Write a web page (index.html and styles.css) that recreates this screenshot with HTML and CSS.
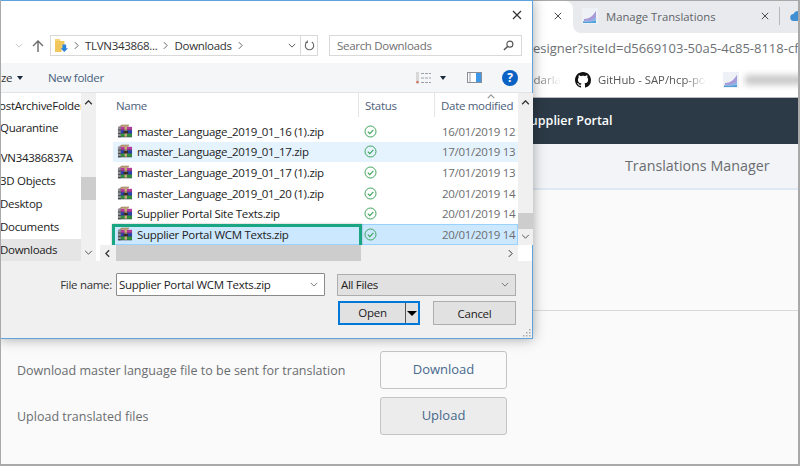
FILE: index.html
```html
<!DOCTYPE html>
<html lang="en">
<head>
<meta charset="utf-8">
<title>Manage Translations</title>
<link rel="stylesheet" href="styles.css">
</head>
<body>
<svg class="sprite" aria-hidden="true">
  <symbol id="rar" viewBox="0 0 17 16">
    <path d="M2 3 5 .8h8l-1.500 2.400z" fill="#8a6a3c"/>
    <path d="M5 1.500h7.500L12 3H3.500z" fill="#d8c49a"/>
    <rect x="1" y="3" width="15" height="3.600" fill="#b23c9c"/>
    <rect x="1" y="6.600" width="15" height="3.600" fill="#2a3fb0"/>
    <rect x="1" y="10.200" width="15" height="3.600" fill="#2f8f3c"/>
    <rect x="1" y="3" width="3" height="10.800" fill="#8d8f92"/>
    <path d="M1 6.400h3M1 10h3M1 13.600h3" stroke="#2d2d2d" stroke-width=".8"/>
    <rect x="8" y="3" width="2.600" height="10.800" fill="#c8ad78"/>
    <rect x="7" y="7.400" width="4.600" height="2.200" fill="#3b3020"/>
    <path d="M4 6.500h12M4 10.100h12M1 13.900h15" stroke="#1d1d3a" stroke-width=".5"/>
  </symbol>
  <symbol id="ok" viewBox="0 0 13 13">
    <circle cx="6.500" cy="6.500" r="5.500" fill="none" stroke="#3da35a" stroke-width="1"/>
    <path d="M3.800 6.600 5.800 8.600 9.400 4.800" fill="none" stroke="#3da35a" stroke-width="1.100"/>
  </symbol>
  <symbol id="chev-down" viewBox="0 0 10 6">
    <path d="M1 1 5 5 9 1" fill="none" stroke="currentColor" stroke-width="1.200"/>
  </symbol>
  <symbol id="chev-up" viewBox="0 0 10 6">
    <path d="M1 5 5 1 9 5" fill="none" stroke="currentColor" stroke-width="1.600"/>
  </symbol>
  <symbol id="chev-right" viewBox="0 0 6 10">
    <path d="M1 1 5 5 1 9" fill="none" stroke="currentColor" stroke-width="1.200"/>
  </symbol>
  <symbol id="chev-left" viewBox="0 0 6 10">
    <path d="M5 1 1 5 5 9" fill="none" stroke="currentColor" stroke-width="1.600"/>
  </symbol>
  <symbol id="close" viewBox="0 0 10 10">
    <path d="M1 1 9 9M9 1 1 9" fill="none" stroke="currentColor" stroke-width="1.200"/>
  </symbol>
  <symbol id="sitefav" viewBox="0 0 16 16">
    <rect width="16" height="16" fill="#eef1f6"/>
    <path d="M1 13C6 13 11 10 14 3V15H1z" fill="#8fb7e4"/>
    <path d="M2 11C7 11 11 8 14 3V9C11 12 7 13 2 13z" fill="#a89ad8"/>
    <path d="M1 15h13v-2C9 14 5 14 1 14z" fill="#4f9fd8"/>
  </symbol>
</svg>

<div class="screen">
  <div class="browser">
    <div class="tabs">
      <div class="tab-active">
        <svg class="tab-x"><use href="#close"/></svg>
      </div>
      <div class="tab-rest">
        <div class="tab">
          <svg class="fav"><use href="#sitefav"/></svg>
          <span class="tab-title">Manage Translations</span>
          <svg class="tab-x"><use href="#close"/></svg>
        </div>
        <span class="tab-sep"></span>
        <svg class="cloud" viewBox="0 0 16 12"><path d="M4 11a3.500 3.500 0 0 1-.5-7A5 5 0 0 1 13 5a3 3 0 0 1 0 6z" fill="#3f8fd2"/></svg>
      </div>
    </div>
    <div class="url">designer?siteId=d5669103-50a5-4c85-8118-cf</div>
    <div class="bookmarks">
      <span class="bm-fade">Sundarla</span>
      <svg class="octocat" viewBox="0 0 16 16"><path fill="#111" fill-rule="evenodd" d="M8 0C3.58 0 0 3.58 0 8c0 3.54 2.29 6.53 5.47 7.59.4.07.55-.17.55-.38 0-.19-.01-.82-.01-1.49-2.01.37-2.53-.49-2.69-.94-.09-.23-.48-.94-.82-1.13-.28-.15-.68-.52-.01-.53.63-.01 1.08.58 1.23.82.72 1.21 1.87.87 2.33.66.07-.52.28-.87.51-1.07-1.78-.2-3.64-.89-3.64-3.95 0-.87.31-1.59.82-2.15-.08-.2-.36-1.02.08-2.12 0 0 .67-.21 2.2.82.64-.18 1.32-.27 2-.27s1.36.09 2 .27c1.53-1.04 2.2-.82 2.2-.82.44 1.1.16 1.92.08 2.12.51.56.82 1.27.82 2.15 0 3.07-1.87 3.75-3.65 3.95.29.25.54.73.54 1.48 0 1.07-.01 1.93-.01 2.2 0 .21.15.46.55.38A8.01 8.01 0 0 0 16 8c0-4.42-3.58-8-8-8z"/></svg>
      <span class="bm-text">GitHub - SAP/hcp-po</span>
      <svg class="fav"><use href="#sitefav"/></svg>
      <span class="bm-blur"></span>
    </div>
    <header class="shell">Supplier Portal</header>
    <div class="subhead">Translations Manager</div>
    <main class="content">
      <div class="blank"></div>
      <div class="actions">
        <div class="action">
          <span class="action-label">Download master language file to be sent for translation</span>
          <button class="action-btn">Download</button>
        </div>
        <div class="action">
          <span class="action-label">Upload translated files</span>
          <button class="action-btn is-grey">Upload</button>
        </div>
      </div>
    </main>
  </div>

  <div class="dialog">
    <div class="titlebar"><svg class="dlg-x"><use href="#close"/></svg></div>
    <div class="addr-row">
      <svg class="nav-down"><use href="#chev-down"/></svg>
      <svg class="nav-up" viewBox="0 0 14 14"><path d="M7 13V2M2 7l5-5 5 5" fill="none" stroke="#6b6b6b" stroke-width="1.400"/></svg>
      <div class="addr">
        <svg class="folder" viewBox="0 0 14 15"><path d="M0 0h5l1 2h4v8H0z" fill="#f4d679"/><path d="M0 2v12h7V6h3V2z" fill="#f1c75b"/><path d="M8 6h4v4h2l-4 4-4-4h2z" fill="#2a83d8"/></svg>
        <svg class="crumb"><use href="#chev-right"/></svg>
        <span>TLVN343868...</span>
        <svg class="crumb"><use href="#chev-right"/></svg>
        <span>Downloads</span>
        <svg class="crumb"><use href="#chev-right"/></svg>
        <span class="addr-fill"></span>
        <svg class="addr-drop"><use href="#chev-down"/></svg>
        <span class="refresh"><svg viewBox="0 0 12 12"><path d="M8.500 2.200A4.600 4.600 0 1 1 3.500 2.200M3.600 .5V2.600H1.500" fill="none" stroke="#666" stroke-width="1.200"/></svg></span>
      </div>
      <div class="search">
        <span class="search-text">Search Downloads</span>
        <svg class="lens" viewBox="0 0 12 12"><circle cx="7.500" cy="4.500" r="3.300" fill="none" stroke="#555" stroke-width="1.200"/><path d="M5 7 1 11" stroke="#555" stroke-width="1.600"/></svg>
      </div>
    </div>
    <div class="toolbar">
      <span class="organize">ze<i class="caret"></i></span>
      <span class="newfolder">New folder</span>
      <span class="tool-fill"></span>
      <svg class="views" viewBox="0 0 15 12"><rect x="0" y="0" width="3" height="12" fill="#d8d8d8"/><path d="M5 1.500h10M5 6h10M5 10.500h10" stroke="#9aa0a6" stroke-dasharray="3 1"/><rect x="0.500" y="9" width="2" height="2" fill="#d9674f"/></svg>
      <i class="caret caret-views"></i>
      <svg class="pane" viewBox="0 0 15 11"><rect x=".5" y=".5" width="14" height="10" fill="#fff" stroke="#8a8f96"/><rect x="9" y="1" width="5" height="9" fill="#3f97e8"/><rect x="2" y="1" width="2" height="9" fill="#c9ced4"/></svg>
      <span class="help">?</span>
    </div>
    <div class="browse">
      <nav class="tree">
        <div class="tree-list">
          <div class="tree-item t-post">PostArchiveFolder</div>
          <div class="tree-item t-quar">Quarantine</div>
          <div class="tree-item t-pc">TLVN34386837A</div>
          <div class="tree-item t-sub">3D Objects</div>
          <div class="tree-item t-sub">Desktop</div>
          <div class="tree-item t-sub">Documents</div>
          <div class="tree-item t-sub is-current">Downloads</div>
        </div>
        <div class="vbar tree-bar">
          <svg class="bar-up"><use href="#chev-up"/></svg>
          <span class="bar-thumb tree-thumb"></span>
          <svg class="bar-down"><use href="#chev-down"/></svg>
        </div>
      </nav>
      <section class="files">
        <div class="files-main">
          <div class="cols">
            <span class="col col-name">Name</span>
            <span class="col col-status">Status</span>
            <span class="col col-date">Date modified<svg class="sort"><use href="#chev-up"/></svg></span>
          </div>
          <div class="row"><svg class="rar"><use href="#rar"/></svg><span class="fname">master_Language_2019_01_16 (1).zip</span><svg class="ok"><use href="#ok"/></svg><span class="fdate">16/01/2019 12</span></div>
          <div class="row is-hover"><svg class="rar"><use href="#rar"/></svg><span class="fname">master_Language_2019_01_17.zip</span><svg class="ok"><use href="#ok"/></svg><span class="fdate">17/01/2019 13</span></div>
          <div class="row"><svg class="rar"><use href="#rar"/></svg><span class="fname">master_Language_2019_01_17 (1).zip</span><svg class="ok"><use href="#ok"/></svg><span class="fdate">17/01/2019 13</span></div>
          <div class="row"><svg class="rar"><use href="#rar"/></svg><span class="fname">master_Language_2019_01_20 (1).zip</span><svg class="ok"><use href="#ok"/></svg><span class="fdate">20/01/2019 14</span></div>
          <div class="row"><svg class="rar"><use href="#rar"/></svg><span class="fname">Supplier Portal Site Texts.zip</span><svg class="ok"><use href="#ok"/></svg><span class="fdate">20/01/2019 14</span></div>
          <div class="row is-selected"><svg class="rar"><use href="#rar"/></svg><span class="fname">Supplier Portal WCM Texts.zip</span><svg class="ok"><use href="#ok"/></svg><span class="fdate">20/01/2019 14</span><span class="callout"></span></div>
        </div>
        <div class="vbar files-bar">
          <svg class="bar-up"><use href="#chev-up"/></svg>
          <span class="bar-thumb files-thumb"></span>
          <svg class="bar-down"><use href="#chev-down"/></svg>
        </div>
        <div class="hbar">
          <svg class="h-left"><use href="#chev-left"/></svg>
          <span class="h-thumb"></span>
          <svg class="h-right"><use href="#chev-right"/></svg>
        </div>
        <div class="corner"></div>
      </section>
    </div>
    <footer class="dlg-foot">
      <div class="foot-row">
        <span class="foot-label">File name:</span>
        <div class="name-input"><span class="name-value">Supplier Portal WCM Texts.zip</span><svg class="select-chev"><use href="#chev-down"/></svg></div>
        <div class="type-select"><span>All Files</span><svg class="select-chev"><use href="#chev-down"/></svg></div>
      </div>
      <div class="foot-btns">
        <div class="open-btn"><span class="open-main">Open</span><span class="open-drop"><i class="caret caret-open"></i></span></div>
        <button class="cancel-btn">Cancel</button>
      </div>
      <svg class="grip" viewBox="0 0 9 9"><path d="M7 1h1.500v1.500H7zM4 4h1.500v1.500H4zM7 4h1.500v1.500H7zM1 7h1.500v1.500H1zM4 7h1.500v1.500H4zM7 7h1.500v1.500H7z" fill="#a9a9a9"/></svg>
    </footer>
  </div>
</div>
</body>
</html>
```

FILE: styles.css
```css
* { box-sizing: border-box; }
html, body { margin: 0; padding: 0; }
body { width: 800px; height: 466px; overflow: hidden; background: #fff; font-family: "Open Sans", sans-serif; }
.sprite { display: none; }
svg { display: block; flex: none; }
i { display: block; }
button { font-family: inherit; padding: 0; cursor: default; }

.screen { position: relative; width: 800px; height: 466px; overflow: hidden; border-left: 1px solid #a9a9a9; border-right: 2px solid #a9a9a9; border-bottom: 2px solid #a9a9a9; }

/* browser behind the dialog */
.browser { display: flex; flex-direction: column; height: 100%; background: #fafafa; }
.tabs { display: flex; height: 33px; flex: none; overflow: hidden; border-top: 1px solid #a9a9a9; background: linear-gradient(#e8eaed 50%, #fff 50%); }
.tab-active { flex: none; width: 572px; height: 100%; background: #fff; border-top-right-radius: 8px; display: flex; align-items: center; justify-content: flex-end; padding: 0 11px 2px 0; }
.tab-rest { flex: 1; display: flex; align-items: center; height: 100%; padding-bottom: 2px; background: #e8eaed; border-bottom-left-radius: 8px; }
.tab { flex: none; display: flex; align-items: center; width: 202px; padding-left: 9px; }
.tab-x { width: 8px; height: 8px; color: #444; }
.tab .tab-x { margin-left: 51px; }
.fav { width: 16px; height: 16px; }
.tab-title { flex: none; font-size: 11.300px; color: #5f6368; margin-left: 8px; white-space: nowrap; width: 104px; }
.tab-sep { flex: none; width: 1px; height: 18px; background: #b5b8bc; margin-left: 4px; }
.cloud { width: 16px; height: 12px; margin-left: 10px; }

.url { height: 31px; flex: none; background: #fff; color: #6d7175; font-size: 13px; line-height: 31px; padding-left: 524px; white-space: nowrap; overflow: hidden; }
.bookmarks { display: flex; align-items: center; height: 34px; flex: none; overflow: hidden; background: #fff; border-bottom: 1px solid #b9bcbf; padding: 0 0 2px 500px; }
.bm-fade { flex: none; font-size: 11.500px; color: #7a7a7a; width: 60px; overflow: hidden; white-space: nowrap; direction: rtl; -webkit-mask-image: linear-gradient(to left, transparent, #000 35%); mask-image: linear-gradient(to left, transparent, #000 35%); }
.octocat { width: 16px; height: 16px; margin-left: 14px; }
.bm-text { flex: none; font-size: 11.300px; color: #555; margin-left: 7px; width: 108px; white-space: nowrap; overflow: hidden; -webkit-mask-image: linear-gradient(to left, transparent, #000 20%); mask-image: linear-gradient(to left, transparent, #000 20%); }
.bookmarks .fav { margin-left: 17px; }
.bm-blur { flex: none; width: 70px; height: 10px; background: #c9c9c9; filter: blur(3px); margin-left: 6px; }
.shell { height: 46px; flex: none; background: #2c3a47; color: #fff; font-size: 12.500px; font-weight: 600; line-height: 45px; padding-left: 522px; white-space: nowrap; }
.subhead { height: 46px; flex: none; background: #f2f4f7; border-bottom: 2px solid #dfe9f3; color: #6a6d70; font-size: 14.300px; line-height: 44px; padding-left: 624px; white-space: nowrap; }
.content { flex: 1; display: flex; flex-direction: column; background: #fafafa; }
.blank { height: 121px; flex: none; border-bottom: 1px solid #d9d9d9; }
.actions { display: flex; flex-direction: column; gap: 8px; padding: 40px 0 0 16px; }
.action { display: flex; align-items: center; height: 38px; }
.action-label { width: 363px; font-size: 12.500px; color: #6a6d70; white-space: nowrap; }
.action-btn { width: 127px; height: 38px; padding-bottom: 2px; background: #fafafa; border: 1px solid #c4c4c4; border-radius: 3px; color: #47698c; font-size: 13px; }
.action-btn.is-grey { background: #ececec; }

/* dialog window */
.dialog { position: absolute; left: -1px; top: 0; width: 533px; height: 339px; background: #fff; border: 1px solid #5ea3dc; border-left: 1px solid #a9a9a9; box-shadow: 0 0 12px rgba(0,0,0,.35); display: flex; flex-direction: column; font-size: 11.500px; letter-spacing: -.3px; color: #222; }
.titlebar { height: 27px; flex: none; display: flex; justify-content: flex-end; align-items: center; padding: 0 10px 0 0; }
.dlg-x { width: 10px; height: 10px; color: #333; }
.addr-row { height: 35px; flex: none; display: flex; align-items: center; }
.nav-down { width: 8px; height: 5px; color: #c8c8c8; margin-left: 14px; }
.nav-up { width: 14px; height: 14px; margin-left: 8px; }
.addr { flex: none; display: flex; align-items: center; width: 268px; height: 21px; margin-left: 5px; border: 1px solid #d9d9d9; padding-left: 4px; color: #333; }
.folder { width: 13px; height: 14px; }
.crumb { width: 5px; height: 9px; color: #666; margin: 0 6px; }
.addr-fill { flex: 1; }
.addr-drop { width: 8px; height: 5px; color: #555; margin-right: 4px; }
.refresh { flex: none; width: 17px; height: 100%; border-left: 1px solid #d9d9d9; display: flex; align-items: center; justify-content: center; }
.refresh svg { width: 11px; height: 11px; }
.search { flex: none; display: flex; align-items: center; justify-content: space-between; width: 193px; height: 21px; margin-left: 11px; border: 1px solid #d9d9d9; padding: 0 7px; color: #6f6f6f; }
.lens { width: 11px; height: 11px; }
.toolbar { height: 30px; flex: none; display: flex; align-items: center; background: #f5f6f7; border-bottom: 1px solid #e2e3e5; color: #4c607a; }
.organize { flex: none; display: flex; align-items: center; color: #333; width: 47px; }
.caret { flex: none; width: 0; height: 0; border-left: 3.500px solid transparent; border-right: 3.500px solid transparent; border-top: 4px solid #1b2a3a; margin-left: 5px; }
.newfolder { color: #47607c; }
.tool-fill { flex: 1; }
.views { width: 15px; height: 12px; }
.caret-views { margin-left: 9px; }
.pane { width: 15px; height: 11px; margin-left: 21px; }
.help { flex: none; width: 16px; height: 16px; border-radius: 50%; background: #0a63c4; color: #fff; font-weight: 700; font-size: 12px; letter-spacing: 0; line-height: 16px; text-align: center; margin: 0 14px 0 20px; }

.browse { flex: 1; min-height: 0; display: flex; background: #fff; }
.tree { display: flex; width: 99px; flex: none; }
.tree-list { width: 80px; overflow: hidden; padding-top: 1.600px; }
.tree-item { white-space: nowrap; height: 22.800px; line-height: 22.800px; }
.t-post { text-indent: -8.500px; }
.t-quar { text-indent: -1px; }
.t-pc { margin-top: 7.200px; text-indent: -12px; }
.t-sub { text-indent: -1px; }
.is-current { background: #e5e5e5; }
.vbar { position: relative; width: 15px; flex: none; background: #f0f0f0; display: flex; flex-direction: column; align-items: center; }
.bar-up { width: 9px; height: 5px; color: #333; margin-top: 7px; }
.bar-down { width: 9px; height: 5px; color: #555; margin-top: auto; margin-bottom: 6px; }
.bar-thumb { display: block; width: 100%; background: #cdcdcd; }
.tree-thumb { height: 23px; margin-top: 72px; }
.files-thumb { height: 16px; margin-top: 108px; }

.files { flex: 1; min-width: 0; display: grid; grid-template-columns: 1fr 14px; grid-template-rows: 1fr 16px; }
.files-main { min-width: 0; overflow: hidden; padding-left: 13px; }
.cols { display: flex; height: 24px; color: #4c607a; align-items: center; margin-left: -13px; margin-bottom: 4px; }
.col { height: 100%; display: flex; align-items: center; border-right: 1px solid #e5e5e5; padding-left: 4px; position: relative; white-space: nowrap; }
.col-name { flex: none; width: 259px; padding-left: 16px; }
.col-status { flex: none; width: 76px; padding-left: 6px; }
.col-date { border-right: 0; padding-left: 6px; }
.sort { position: absolute; left: 52px; top: 1px; width: 8px; height: 5px; color: #999; }
.row { position: relative; display: flex; align-items: center; height: 20.600px; }
.row.is-hover { background: #e5f3ff; }
.row.is-selected { background: #cce8ff; border: 1px solid #99d1ff; border-left: 0; }
.rar { width: 16px; height: 15px; margin-left: 4px; }
.fname { flex: none; width: 227px; margin-left: 4px; white-space: nowrap; color: #222; }
.ok { width: 13px; height: 13px; }
.fdate { flex: none; margin-left: 65px; color: #6d6d6d; white-space: nowrap; }
.callout { position: absolute; left: -1px; top: -1px; width: 250px; height: 24px; border: 3px solid #1aa583; box-shadow: 0 0 2px rgba(0,0,0,.3); }

.hbar { display: flex; align-items: stretch; background: #f0f0f0; position: relative; }
.h-left { width: 5px; height: 9px; color: #333; margin: 4px 6px 0 5px; }
.h-thumb { flex: none; width: 245px; background: #cdcdcd; }
.h-right { width: 5px; height: 9px; color: #333; margin: 4px 5px 0 auto; }
.corner { background: #fff; }

.dlg-foot { position: relative; height: 77px; flex: none; background: #f0f0f0; padding: 12px 14px 0 0; }
.foot-row { display: flex; align-items: center; }
.foot-label { flex: none; width: 115px; padding-right: 4px; text-align: right; color: #333; }
.name-input { flex: none; display: flex; align-items: center; justify-content: space-between; width: 209px; height: 23px; background: #fff; border: 1px solid #8a8a8a; border-radius: 1px; padding: 0 6px 0 2px; }
.select-chev { width: 8px; height: 5px; color: #777; }
.type-select { flex: none; display: flex; align-items: center; justify-content: space-between; width: 179px; height: 22px; margin-left: 12px; background: #e1e1e1; border: 1px solid #adadad; padding: 0 6px 0 3px; }
.foot-btns { display: flex; margin-top: 5px; margin-left: 337px; gap: 13px; }
.open-btn { display: flex; width: 82px; height: 24px; background: #e1e1e1; border: 2px solid #0078d7; }
.open-main { flex: 1; text-align: center; line-height: 20px; border-right: 1px solid #555; }
.open-drop { flex: none; width: 12px; display: flex; align-items: center; justify-content: center; }
.caret-open { margin: 0; border-left-width: 5px; border-right-width: 5px; border-top: 5px solid #000; }
.cancel-btn { width: 83px; height: 24px; background: #e1e1e1; border: 1px solid #adadad; font-size: 11.500px; letter-spacing: -.3px; color: #222; }
.grip { position: absolute; right: 1px; bottom: 1px; width: 9px; height: 9px; }
```
